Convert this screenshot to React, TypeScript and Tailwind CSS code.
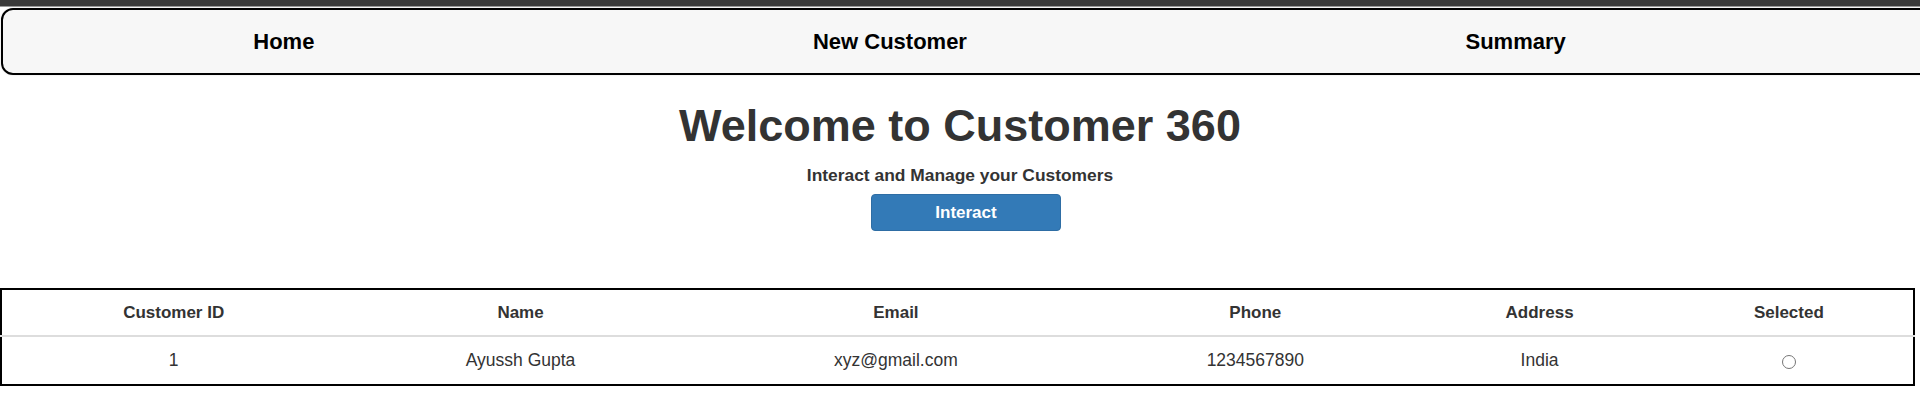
const navItems = ["Home", "New Customer", "Summary"];

const columns = [
  { label: "Customer ID", width: "w-[344px]" },
  { label: "Name", width: "w-[350px]" },
  { label: "Email", width: "w-[400px]" },
  { label: "Phone", width: "w-[318px]" },
  { label: "Address", width: "w-[250px]" },
  { label: "Selected", width: "w-[249px]" },
];

const customers = [
  { id: 1, name: "Ayussh Gupta", email: "xyz@gmail.com", phone: "1234567890", address: "India" },
];

export default function App() {
  return (
    <div className="w-[1920px] h-[401px] overflow-hidden bg-white font-['Liberation_Sans',Arial,sans-serif]">
      <div className="h-[6px] bg-[#3a3a3a]" />
      <div className="h-px bg-[#9a9a9a]" />

      <nav className="mt-px ml-px w-[1960px] h-[67px] rounded-[12px] border-2 border-black bg-[#f7f7f7] shadow-[0_0_2px_rgba(0,0,0,0.15)] flex items-center">
        <ul className="ml-px w-[1811px] flex justify-around">
          {navItems.map((item) => (
            <li key={item} className="text-[22px] font-bold text-black leading-[26px]">
              {item}
            </li>
          ))}
        </ul>
      </nav>

      <section className="flex flex-col items-center">
        <h1 className="mt-[25px] text-[45px] leading-[52px] font-bold text-[#333]">
          Welcome to Customer 360
        </h1>
        <p className="mt-[12px] text-[17.4px] leading-[22px] font-bold text-[#333]">
          Interact and Manage your Customers
        </p>
        <button className="mt-[8px] ml-3 w-[190px] h-[37px] rounded-[4px] border border-[#2e6da4] bg-[#337ab7] text-white text-[17px] font-bold">
          Interact
        </button>
      </section>

      <table className="mt-[57px] w-[1915px] border-2 border-black border-collapse table-fixed">
        <thead>
          <tr className="h-[47px] border-b-2 border-[#ddd]">
            {columns.map((col) => (
              <th key={col.label} className={`${col.width} text-[17px] font-bold text-[#333] text-center`}>
                {col.label}
              </th>
            ))}
          </tr>
        </thead>
        <tbody>
          {customers.map((c) => (
            <tr key={c.id} className="h-[49px] text-[17.5px] text-[#333]">
              <td className="text-center">{c.id}</td>
              <td className="text-center">{c.name}</td>
              <td className="text-center">{c.email}</td>
              <td className="text-center">{c.phone}</td>
              <td className="text-center">{c.address}</td>
              <td className="text-center">
                <span className="inline-block align-middle w-[14px] h-[14px] rounded-full border border-[#767676] bg-white" />
              </td>
            </tr>
          ))}
        </tbody>
      </table>
    </div>
  );
}
